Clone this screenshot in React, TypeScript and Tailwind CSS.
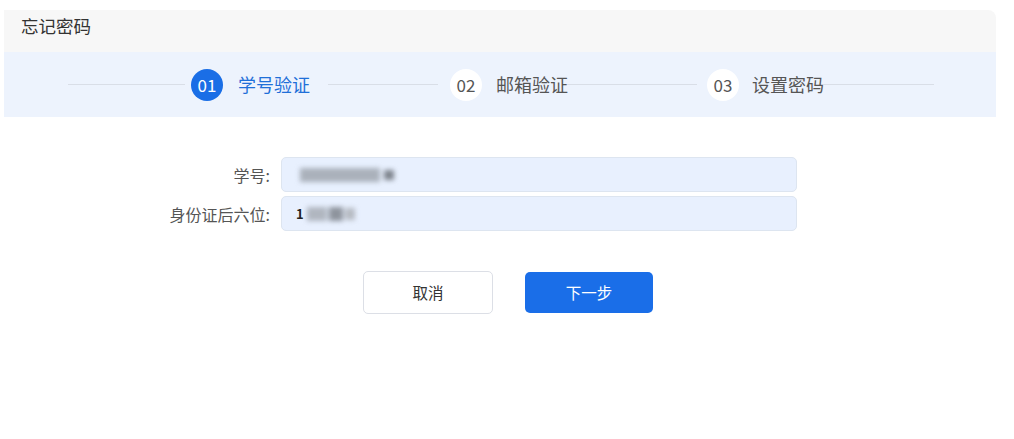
import React from "react";

const font = { fontFamily: '"Noto Sans CJK SC", "Noto Sans", sans-serif' };

function Line({ w }: { w: number }) {
  return <div className="h-px bg-[#d9dee7]" style={{ width: w }} />;
}

export default function App() {
  return (
    <div className="w-[1014px] h-[439px] bg-white relative overflow-hidden" style={font}>
      <div className="pt-[10px] pl-[4px] w-[996px]">
        <div className="h-[42px] bg-[#f7f7f7] rounded-tr-[8px] flex items-start pt-[3px] pl-[17px] text-[17.5px] text-[#333]">
          忘记密码
        </div>
        <div className="h-[65px] bg-[#edf3fd] flex items-center pl-[64px]">
          <Line w={117} />
          <div className="ml-[6px] w-[32px] h-[32px] rounded-full bg-[#1a6ee6] text-white flex items-center justify-center text-[17px]">01</div>
          <div className="ml-[15px] text-[18px] text-[#1f6fd8] w-[72px] whitespace-nowrap">学号验证</div>
          <div className="ml-[18px]"><Line w={110} /></div>
          <div className="ml-[12px] w-[32px] h-[32px] rounded-full bg-white text-[#555] flex items-center justify-center text-[17px]">02</div>
          <div className="ml-[14px] text-[18px] text-[#555] w-[71px] whitespace-nowrap">邮箱验证</div>
          <Line w={130} />
          <div className="ml-[10px] w-[32px] h-[32px] rounded-full bg-white text-[#555] flex items-center justify-center text-[17px]">03</div>
          <div className="ml-[13px] text-[18px] text-[#555] w-[71px] whitespace-nowrap">设置密码</div>
          <Line w={111} />
        </div>
      </div>
      <div className="mt-[40px] flex flex-col gap-[4px]">
        <div className="flex items-center">
          <div className="w-[271px] text-right text-[16px] text-[#555] pr-[1px]">学号:</div>
          <div className="ml-[10px] w-[516px] h-[35px] rounded-[5px] bg-[#e8f0fe] border border-[#dde5f0] flex items-center pl-[18px]">
            <div className="flex items-center gap-[4px] blur-[2.5px]">
              <div className="w-[80px] h-[14px] bg-[#aab1bb]" />
              <div className="w-[10px] h-[10px] bg-[#7d838c]" />
            </div>
          </div>
        </div>
        <div className="flex items-center">
          <div className="w-[271px] text-right text-[16px] text-[#555] pr-[1px]">身份证后六位:</div>
          <div className="ml-[10px] w-[516px] h-[35px] rounded-[5px] bg-[#e8f0fe] border border-[#dde5f0] flex items-center pl-[14px]">
            <span className="text-[13px] text-[#222] font-bold">1</span>
            <div className="ml-[3px] flex items-center gap-[2px] blur-[2.5px]">
              <div className="w-[20px] h-[14px] bg-[#b0b6c0]" />
              <div className="w-[14px] h-[14px] bg-[#8e949d]" />
              <div className="w-[10px] h-[12px] bg-[#b5bac2]" />
            </div>
          </div>
        </div>
      </div>
      <div className="mt-[40px] flex pl-[363px] gap-[32px] items-center">
        <button className="w-[130px] h-[43px] rounded-[5px] bg-white border border-[#dcdfe6] text-[15.5px] text-[#333]">取消</button>
        <button className="w-[128px] h-[41px] rounded-[5px] bg-[#1a6ee8] text-white text-[15.5px]">下一步</button>
      </div>
    </div>
  );
}
